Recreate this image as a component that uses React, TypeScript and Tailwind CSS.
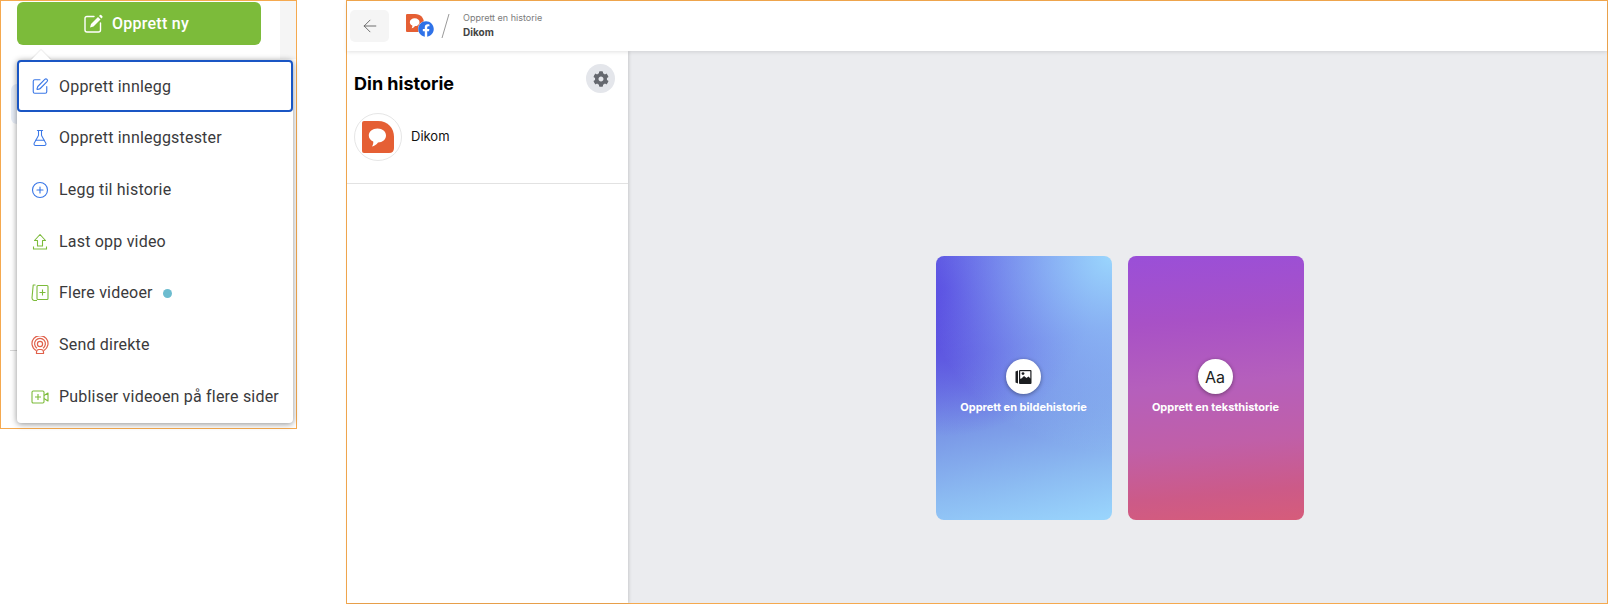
import React from 'react';
import { SquarePen, FlaskConical, CirclePlus, ArrowLeft } from 'lucide-react';
import { FaCog, FaFacebook } from 'react-icons/fa';

const ComposeIcon = () => (
  <svg width="19" height="19" viewBox="0 0 19 19" fill="none">
    <path d="M10 2.5 H3 Q1 2.5 1 4.5 V16 Q1 18 3 18 H14.5 Q16.5 18 16.5 16 V9" stroke="#fff" strokeWidth="1.4" strokeLinecap="round" />
    <path d="M6 13.5 L7 10 L14 3 L16.5 5.5 L9.5 12.5 Z" fill="#fff" />
    <path d="M15 2 L16 1 Q16.6 0.6 17.2 1 L18.4 2.2 Q18.8 2.8 18.4 3.4 L17.4 4.4 Z" fill="#fff" />
  </svg>
);

const UploadIcon = () => (
  <svg width="18" height="18" viewBox="0 0 18 18" fill="none" stroke="#7cbb3a" strokeWidth="1.1">
    <path d="M9 1.5 L14.5 7.5 H11.5 V13 H6.5 V7.5 H3.5 Z" strokeLinejoin="round" />
    <path d="M2.5 13.5 V16 H15.5 V13.5" />
  </svg>
);

const ReelsIcon = () => (
  <svg width="18" height="18" viewBox="0 0 18 18" fill="none" stroke="#7cbb3a" strokeWidth="1.1">
    <rect x="6" y="1.5" width="11" height="14" rx="1" />
    <path d="M11.5 5.5 V11.5 M8.5 8.5 H14.5" />
    <path d="M4.5 1 H2.2 L1 14 Q1 16 3 16.5 H6" strokeLinejoin="round" />
  </svg>
);

const LiveIcon = () => (
  <svg width="18" height="19" viewBox="0 0 18 19" fill="none" stroke="#e0604a" strokeWidth="1.2">
    <path d="M5 14.5 A8 8 0 1 1 13 14.5" />
    <path d="M6 12.2 A5.4 5.4 0 1 1 12 12.2" />
    <circle cx="9" cy="8" r="2.6" />
    <path d="M5.5 17.5 V16 Q5.5 13.5 8 13.5 H10 Q12.5 13.5 12.5 16 V17.5 Z" />
  </svg>
);

const CrossPostIcon = () => (
  <svg width="18" height="18" viewBox="0 0 18 18" fill="none" stroke="#7cbb3a" strokeWidth="1.1">
    <rect x="1" y="3" width="12" height="12" rx="1.2" />
    <path d="M7 6 V12 M4 9 H10" />
    <path d="M13 7.5 L17 5 V13 L13 10.5" strokeLinejoin="round" />
  </svg>
);

const PageLogo = ({ size }: { size: number }) => (
  <svg width={size} height={size} viewBox="0 0 32 32">
    <path d="M2 0 H16 C26 0 32 7 32 16 V27 Q32 32 27 32 H2 Q0 32 0 30 V2 Q0 0 2 0 Z" fill="#e55f34" />
    <path d="M15.5 7.5 C20.5 7.5 24 10.5 24 14.5 C24 18.5 20.5 21.5 16 21.5 C14.5 23.5 12.5 25 10 25.5 C11 24 11.5 22.5 11.2 20.6 C8.5 19.4 6.8 17.2 6.8 14.5 C6.8 10.5 10.5 7.5 15.5 7.5 Z" fill="#fff" />
  </svg>
);

const PhotoIcon = () => (
  <svg width="17" height="16" viewBox="0 0 17 16">
    <path d="M0.5 2.5 L3 1.5 V14.5 L0.5 13.5 Z" fill="#1c1e21" />
    <rect x="4" y="1" width="12.5" height="14" rx="1" fill="#1c1e21" />
    <rect x="5.2" y="2.2" width="10.1" height="7.5" fill="#fff" />
    <circle cx="8" cy="4.6" r="1.4" fill="#1c1e21" />
    <path d="M5 11 L9 7 L11.5 9 L13.5 7.5 L16 10 V11.5 H5 Z" fill="#1c1e21" />
  </svg>
);

const menuItems = [
  { label: 'Opprett innlegg', icon: <SquarePen size={23} strokeWidth={1.5} color="#3b78e7" />, active: true },
  { label: 'Opprett innleggstester', icon: <FlaskConical size={24} strokeWidth={1.4} color="#3b78e7" /> },
  { label: 'Legg til historie', icon: <CirclePlus size={22} strokeWidth={1.5} color="#3b78e7" /> },
  { label: 'Last opp video', icon: <UploadIcon /> },
  { label: 'Flere videoer', icon: <ReelsIcon />, dot: true },
  { label: 'Send direkte', icon: <LiveIcon /> },
  { label: 'Publiser videoen på flere sider', icon: <CrossPostIcon /> },
];

const CreateMenu = () => (
  <div className="w-[297px] h-[429px] shrink-0 border border-[#f5a94f] bg-white relative font-['Roboto',sans-serif]">
    <div className="absolute right-0 top-0 w-[16px] h-[58px] bg-[#f5f5f5]" />
    <div className="absolute left-[10px] top-[83px] w-[10px] h-[40px] rounded-l-md bg-[#e8eef8]" />
    <div className="absolute left-[9px] top-[349px] w-[10px] h-px bg-[#d8d8d8]" />
    <div className="ml-[16px] mt-px w-[244px] h-[43px] rounded-md bg-[#7cbb3a] flex items-center justify-center gap-[9px] pr-[5px] text-white text-[16px] tracking-[0.25px] font-medium">
      <ComposeIcon />
      <span>Opprett ny</span>
    </div>
    <div className="absolute left-[16px] top-[59px] w-[276px] h-[363px] bg-white rounded-[4px] shadow-[0_1px_6px_rgba(0,0,0,0.45)] z-10">
      <div className="absolute left-[17px] top-[-7px] w-[14px] h-[14px] rotate-45 bg-white shadow-[-1px_-1px_1px_rgba(0,0,0,0.08)]" />
      <div className="relative flex flex-col">
        {menuItems.map((item) => (
          <div
            key={item.label}
            className={`h-[51.67px] pt-[2px] flex items-center text-[16px] tracking-[0.2px] text-[#3a3a3c] rounded-[4px] ${item.active ? 'border-2 border-[#1a56c4] pl-[12px] bg-white' : 'pl-[14px]'}`}
          >
            <span className="w-[18px] h-[19px] flex items-center justify-center shrink-0">{item.icon}</span>
            <span className="ml-[10px] whitespace-nowrap">{item.label}</span>
            {item.dot && <span className="ml-[10px] w-[9px] h-[9px] rounded-full bg-[#6cbccf]" />}
          </div>
        ))}
      </div>
    </div>
  </div>
);

const StoryCard = ({ label, icon, bg }: { label: string; icon: React.ReactNode; bg: string }) => (
  <div className={`w-[176px] h-[264px] rounded-lg flex flex-col items-center pt-[103px] ${bg}`}>
    <div className="w-[35px] h-[35px] mr-[2px] rounded-full bg-white flex items-center justify-center shadow-[0_1px_4px_rgba(0,0,0,0.4)]">
      {icon}
    </div>
    <span className="mt-[5px] mr-px text-[11px] leading-[16px] font-bold text-white whitespace-nowrap">{label}</span>
  </div>
);

const StoryComposer = () => (
  <div className="w-[1262px] h-[604px] shrink-0 border border-[#f5a94f] bg-[#ebecef] flex flex-col font-['Inter',sans-serif]">
    <header className="h-[50px] shrink-0 bg-white flex items-center pl-[3px] shadow-[0_1px_4px_rgba(0,0,0,0.12)] relative z-10">
      <div className="w-[39px] h-[32px] rounded-[5px] bg-[#f5f5f5] flex items-center justify-center">
        <ArrowLeft size={20} strokeWidth={1} color="#555" />
      </div>
      <div className="relative ml-[17px] w-[28px] h-[24px]">
        <div className="absolute left-0 top-0"><PageLogo size={18} /></div>
        <div className="absolute left-[12px] top-[7px] w-[16px] h-[16px] rounded-full bg-white flex items-center justify-center">
          <FaFacebook size={16} color="#2f72e8" />
        </div>
      </div>
      <svg className="ml-[7px]" width="9" height="26" viewBox="0 0 9 26" fill="none" stroke="#9a9a9a">
        <path d="M8 1 L1 25" />
      </svg>
      <div className="ml-[13px] mb-[2px] flex flex-col">
        <span className="text-[9px] leading-[14px] text-[#7b7b7b]">Opprett en historie</span>
        <span className="text-[10px] leading-[15px] font-bold text-[#444]">Dikom</span>
      </div>
    </header>
    <div className="flex-1 flex min-h-0">
      <aside className="w-[281px] shrink-0 bg-white shadow-[1px_0_3px_rgba(0,0,0,0.15)] flex flex-col">
        <div className="flex justify-between pl-[7px] pr-[13px] pt-[13px]">
          <h1 className="text-[18px] leading-[24px] mt-[8px] font-bold text-black">Din historie</h1>
          <div className="w-[29px] h-[29px] rounded-full bg-[#e4e6eb] flex items-center justify-center">
            <FaCog size={16} color="#65686f" />
          </div>
        </div>
        <div className="flex items-center h-[48px] mt-[17px] pl-[7px]">
          <div className="w-[48px] h-[48px] rounded-full border border-[#e6e6e6] flex items-center justify-center">
            <PageLogo size={32} />
          </div>
          <span className="ml-[9px] text-[13px] text-[#111]">Dikom</span>
        </div>
        <div className="mt-[22px] h-px bg-[#e2e2e2]" />
      </aside>
      <main className="flex-1 flex items-start justify-center gap-[16px] pt-[205px] pl-[5px]">
        <StoryCard
          label="Opprett en bildehistorie"
          icon={<PhotoIcon />}
          bg="bg-[radial-gradient(circle_at_100%_0%,#9ad6fd_0%,rgba(154,214,253,0)_62%),radial-gradient(circle_at_5%_12%,#5544e0_0%,rgba(85,68,224,0)_52%),linear-gradient(168deg,#6660e0_0%,#6a72e2_35%,#7c9ce8_62%,#8cbcf2_82%,#9ad6fd_100%)]"
        />
        <StoryCard
          label="Opprett en teksthistorie"
          icon={<span className="text-[16px] text-[#1c1e21]">Aa</span>}
          bg="bg-[linear-gradient(175deg,#9a4fd8_0%,#a851c6_25%,#b55fbc_48%,#c05fa8_70%,#cc5a88_88%,#d65c7a_100%)]"
        />
      </main>
    </div>
  </div>
);

export default function App() {
  return (
    <div className="w-[1608px] h-[604px] bg-white flex items-start gap-[49px] overflow-hidden">
      <CreateMenu />
      <StoryComposer />
    </div>
  );
}
